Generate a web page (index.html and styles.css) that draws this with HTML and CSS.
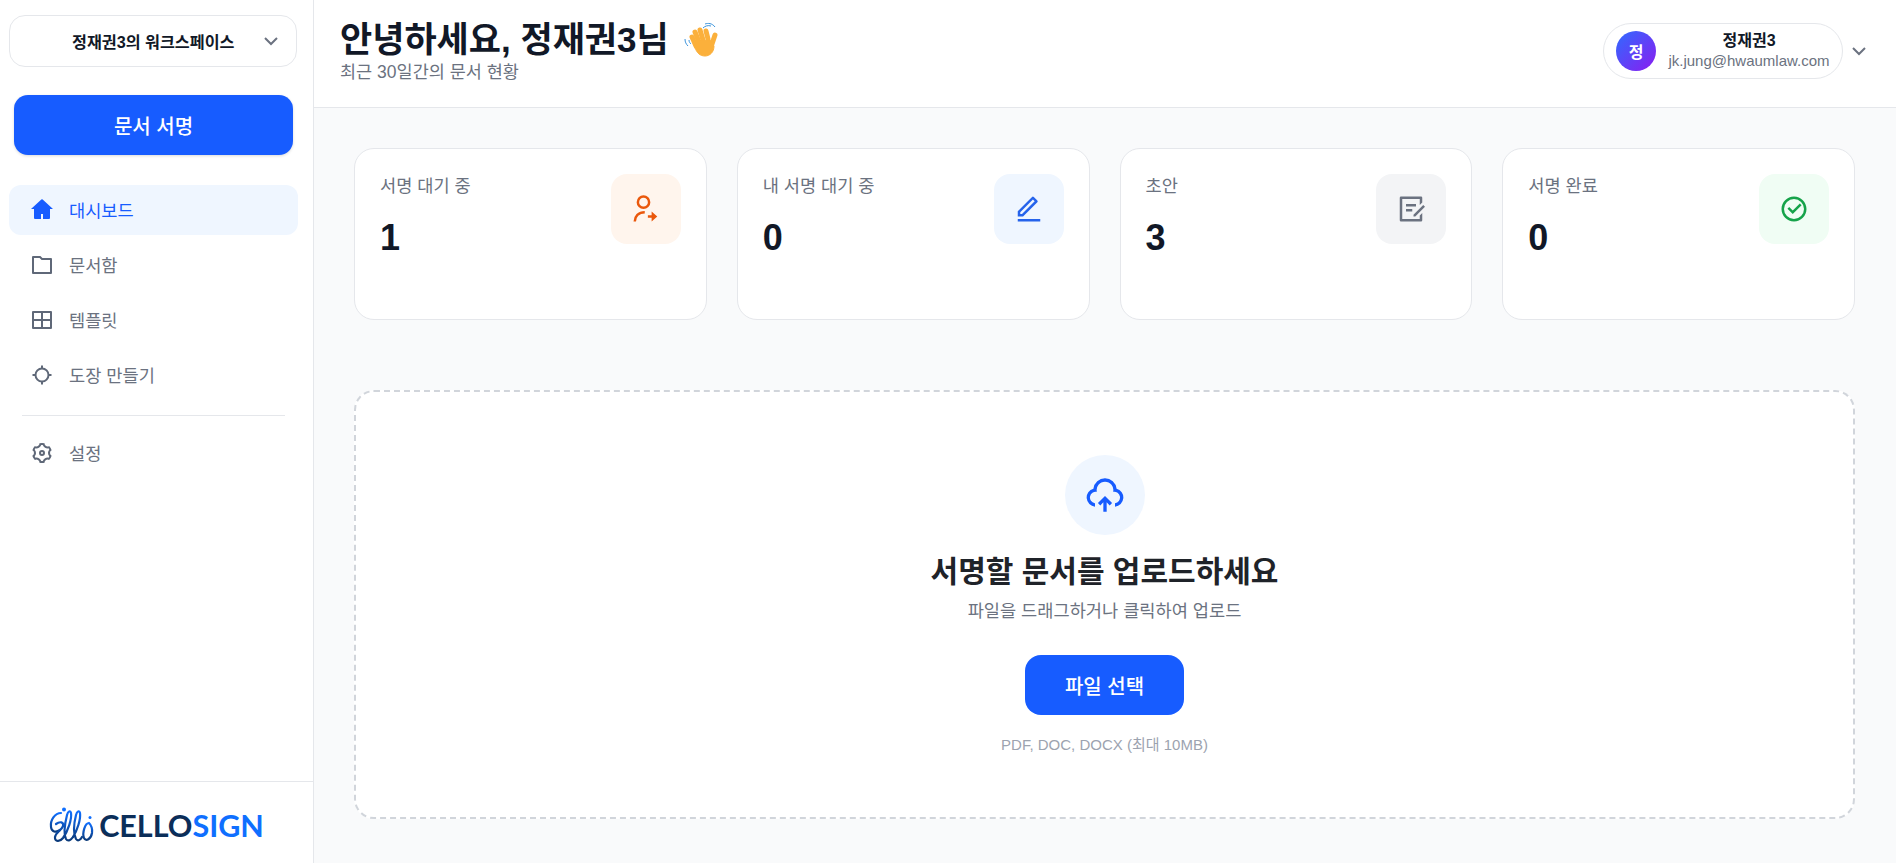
FILE: index.html
```html
<!DOCTYPE html>
<html lang="ko">
<head>
    <meta charset="utf-8">
    <title>CelloSign</title>
    <link rel="stylesheet" href="styles.css">
</head>
<body>
    <aside class="sidebar">
        <div class="workspace">
            <span class="workspace-name">정재권3의 워크스페이스</span>
            <svg class="chevron" viewBox="0 0 24 24"><path d="M6 9l6 6 6-6"/></svg>
        </div>
        <button class="sign-button">문서 서명</button>
        <nav class="nav">
            <a class="nav-item active">
                <svg class="nav-icon" viewBox="0 0 24 24"><path fill-rule="evenodd" d="M19 21H5a1 1 0 0 1-1-1v-9H1l10.327-9.388a1 1 0 0 1 1.346 0L23 11h-3v9a1 1 0 0 1-1 1zM11 16v5h2v-5h-2z"/></svg>
                <span class="nav-label">대시보드</span>
            </a>
            <a class="nav-item">
                <svg class="nav-icon" viewBox="0 0 24 24"><path d="M4 5v14h16V7h-8.414l-2-2H4zm8.414 0H21a1 1 0 0 1 1 1v14a1 1 0 0 1-1 1H3a1 1 0 0 1-1-1V4a1 1 0 0 1 1-1h7.414l2 2z"/></svg>
                <span class="nav-label">문서함</span>
            </a>
            <a class="nav-item">
                <svg class="nav-icon" viewBox="0 0 24 24"><path d="M21 3a1 1 0 0 1 1 1v16a1 1 0 0 1-1 1H3a1 1 0 0 1-1-1V4a1 1 0 0 1 1-1h18zM11 13H4v6h7v-6zm9 0h-7v6h7v-6zm-9-8H4v6h7V5zm9 0h-7v6h7V5z"/></svg>
                <span class="nav-label">템플릿</span>
            </a>
            <a class="nav-item">
                <svg class="nav-icon" viewBox="0 0 24 24"><circle class="line" cx="12" cy="12" r="6.5"/><path class="line" d="M12 2.5v3M12 18.5v3M2.5 12h3M18.5 12h3"/></svg>
                <span class="nav-label">도장 만들기</span>
            </a>
            <div class="nav-divider"></div>
            <a class="nav-item">
                <svg class="nav-icon" viewBox="0 0 24 24"><path d="M3.34 17a10.018 10.018 0 0 1-.978-2.326 3 3 0 0 0 .002-5.347A9.99 9.99 0 0 1 4.865 4.99a3 3 0 0 0 4.631-2.674 9.99 9.99 0 0 1 5.007.002 3 3 0 0 0 4.632 2.672c.579.59 1.093 1.261 1.525 2.01.433.749.757 1.53.978 2.326a3 3 0 0 0-.002 5.347 9.99 9.99 0 0 1-2.501 4.337 3 3 0 0 0-4.631 2.674 9.99 9.99 0 0 1-5.007-.002 3 3 0 0 0-4.632-2.672A10.018 10.018 0 0 1 3.34 17zm5.66.196a4.993 4.993 0 0 1 2.25 2.77c.499.047 1 .048 1.499.001A4.993 4.993 0 0 1 15 17.197a4.993 4.993 0 0 1 3.525-.565c.29-.41.54-.847.748-1.304A4.993 4.993 0 0 1 18 12c0-1.28.481-2.448 1.273-3.33a8.126 8.126 0 0 0-.75-1.303A4.993 4.993 0 0 1 15 6.804a4.993 4.993 0 0 1-2.25-2.77c-.499-.047-1-.048-1.499-.001A4.993 4.993 0 0 1 9 6.803a4.993 4.993 0 0 1-3.525.565 7.99 7.99 0 0 0-.748 1.304A4.993 4.993 0 0 1 6 12c0 1.28-.481 2.448-1.273 3.33.218.456.468.892.75 1.303A4.993 4.993 0 0 1 9 17.196zM12 15a3 3 0 1 1 0-6 3 3 0 0 1 0 6zm0-2a1 1 0 1 0 0-2 1 1 0 0 0 0 2z"/></svg>
                <span class="nav-label">설정</span>
            </a>
        </nav>
        <div class="sidebar-footer">
            <svg class="logo-mark" viewBox="0 0 45 36">
                <defs>
                    <linearGradient id="scriptGrad" x1="0" y1="0" x2="0" y2="1">
                        <stop offset="0" stop-color="#0f6fff"/>
                        <stop offset="1" stop-color="#0b3a7a"/>
                    </linearGradient>
                </defs>
                <g class="logo-script" stroke="url(#scriptGrad)">
                    <path d="M12 6C6 6 1 13 2 20C2.500 25 7 26 11 23"/>
                    <path d="M7 17C11 14 15 15 14 19C13 23 7 25 6 30C5.500 35 11 35 14 31C19 24 23 12 22 6C21.500 3 19 4 18 8C16 16 14 26 17 32C19 35 22 33 24 30"/>
                    <path d="M24 30C28 24 32 12 31 6C30.500 3 28 4 27 8C25 16 24 26 27 32C29 35 32 32 33 30"/>
                    <path d="M40 16C36 16 33 26 35 31C37 35 42 32 43 26C43.500 22 42 18 40 16"/>
                </g>
                <circle cx="15" cy="2.500" r="2" fill="#0f6fff"/>
                <circle cx="41" cy="10.500" r="1.500" fill="#0f6fff"/>
            </svg>
            <span class="logo-text">CELLO<span class="logo-accent">SIGN</span></span>
        </div>
    </aside>

    <div class="content">
        <header class="topbar">
            <div>
                <h1 class="greeting">안녕하세요, 정재권3님
                    <svg class="wave" viewBox="0 0 34 36">
                        <g class="wave-lines">
                            <path d="M19 6c2-2 5-3 8-2"/>
                            <path d="M21 2c3-1 7-1 10 3"/>
                            <path d="M1 17c0 3 1 5 3 7"/>
                            <path d="M5 18c0 2 1 3 2 4"/>
                        </g>
                        <g class="wave-hand">
                            <path d="M12 24L8 15"/>
                            <path d="M15 20L11 10"/>
                            <path d="M19 18L16 8"/>
                            <path d="M24 17L22 9"/>
                            <path d="M28 22l3-9"/>
                            <path class="wave-palm" d="M13 19l13-1 4 6c0 6-4 10-9 10s-8-3-10-8z"/>
                        </g>
                    </svg>
                </h1>
                <p class="subtitle">최근 30일간의 문서 현황</p>
            </div>
            <div class="user">
                <div class="user-pill">
                    <div class="avatar">정</div>
                    <div class="user-text">
                        <div class="user-name">정재권3</div>
                        <div class="user-email">jk.jung@hwaumlaw.com</div>
                    </div>
                </div>
                <svg class="chevron" viewBox="0 0 24 24"><path d="M6 9l6 6 6-6"/></svg>
            </div>
        </header>

        <main class="main">
            <section class="stats">
                <div class="card">
                    <div>
                        <div class="card-label">서명 대기 중</div>
                        <div class="card-value">1</div>
                    </div>
                    <div class="card-icon orange">
                        <svg viewBox="0 0 24 24">
                            <circle class="line" cx="10" cy="6.500" r="4.500"/>
                            <path class="line" d="M3 22c0-4 3-7.500 8-7.500"/>
                            <path d="M13.500 17h3v-3l4.500 4-4.500 4v-3h-3z"/>
                        </svg>
                    </div>
                </div>
                <div class="card">
                    <div>
                        <div class="card-label">내 서명 대기 중</div>
                        <div class="card-value">0</div>
                    </div>
                    <div class="card-icon blue">
                        <svg viewBox="0 0 24 24"><path d="M6.414 16L16.556 5.858l-1.414-1.414L5 14.586V16h1.414zm.829 2H3v-4.243L14.435 2.322a1 1 0 0 1 1.414 0l2.829 2.829a1 1 0 0 1 0 1.414L7.243 18zM3 20h18v2H3v-2z"/></svg>
                    </div>
                </div>
                <div class="card">
                    <div>
                        <div class="card-label">초안</div>
                        <div class="card-value">3</div>
                    </div>
                    <div class="card-icon gray">
                        <svg viewBox="0 0 24 24"><path d="M20 2a1 1 0 0 1 1 1v3.757l-2 2V4H5v16h14v-2.758l2-2V21a1 1 0 0 1-1 1H4a1 1 0 0 1-1-1V3a1 1 0 0 1 1-1h16zm1.778 6.808l1.414 1.414L15.414 18l-1.416-.002.002-1.412 7.778-7.778zM13 12v2H8v-2h5zm3-4v2H8V8h8z"/></svg>
                    </div>
                </div>
                <div class="card">
                    <div>
                        <div class="card-label">서명 완료</div>
                        <div class="card-value">0</div>
                    </div>
                    <div class="card-icon green">
                        <svg viewBox="0 0 24 24"><path d="M12 22C6.477 22 2 17.523 2 12S6.477 2 12 2s10 4.477 10 10-4.477 10-10 10zm0-2a8 8 0 1 0 0-16 8 8 0 0 0 0 16zm-.997-4L6.760 11.757l1.414-1.414 2.829 2.829 5.656-5.657 1.415 1.414L11.003 16z"/></svg>
                    </div>
                </div>
            </section>

            <section class="upload">
                <div class="upload-circle">
                    <svg viewBox="0 0 24 24"><path d="M12 12.586l4.243 4.242-1.415 1.415L13 16.415V22h-2v-5.587l-1.828 1.830-1.415-1.415L12 12.586zM12 2a7.001 7.001 0 0 1 6.954 6.194A5.500 5.500 0 0 1 18 18.978v-2.014a3.500 3.500 0 1 0-1.111-6.910 5 5 0 1 0-9.777 0 3.500 3.500 0 0 0-1.292 6.880l.180.030v2.014a5.500 5.500 0 0 1-.954-10.784A7 7 0 0 1 12 2z"/></svg>
                </div>
                <h2 class="upload-title">서명할 문서를 업로드하세요</h2>
                <p class="upload-desc">파일을 드래그하거나 클릭하여 업로드</p>
                <button class="file-button">파일 선택</button>
                <p class="upload-note">PDF, DOC, DOCX (최대 10MB)</p>
            </section>
        </main>
    </div>
</body>
</html>
```

FILE: styles.css
```css
* {
    box-sizing: border-box;
}
body {
    margin: 0;
    height: 100vh;
    display: flex;
    overflow: hidden;
    font-family: "Liberation Sans", "Noto Sans CJK KR", sans-serif;
    color: #111827;
    background-color: #f9fafb;
}
button {
    font-family: inherit;
    border: none;
    cursor: pointer;
}
svg {
    display: block;
    fill: currentColor;
}
.line {
    fill: none;
    stroke: currentColor;
    stroke-width: 2;
}
.chevron {
    width: 24px;
    height: 24px;
    fill: none;
    stroke: #6b7280;
    stroke-width: 2;
    flex-shrink: 0;
}

/* sidebar */
.sidebar {
    width: 314px;
    flex-shrink: 0;
    display: flex;
    flex-direction: column;
    background-color: #fff;
    border-right: 1px solid #e5e7eb;
    padding-top: 15px;
}
.workspace {
    height: 52px;
    margin: 0 16px 0 9px;
    padding: 0 13px 0 62px;
    display: flex;
    align-items: center;
    justify-content: space-between;
    border: 1px solid #e5e7eb;
    border-radius: 16px;
}
.workspace-name {
    font-size: 16.2px;
    font-weight: 700;
    white-space: nowrap;
}
.sign-button {
    height: 60px;
    margin: 28px 20px 0 14px;
    border-radius: 14px;
    background-color: #175cff;
    color: #fff;
    font-size: 20px;
    font-weight: 500;
    box-shadow: 0 1px 3px rgba(0, 0, 0, 0.15);
}
.nav {
    margin: 30px 15px 0 9px;
    display: flex;
    flex-direction: column;
    gap: 5px;
}
.nav-item {
    height: 50px;
    padding: 0 21px;
    display: flex;
    align-items: center;
    gap: 15px;
    border-radius: 12px;
    font-size: 17.6px;
    color: #6b7280;
}
.nav-label {
    margin-bottom: 2px;
}
.nav-item.active {
    background-color: #eff6ff;
    color: #175cff;
}
.nav-icon {
    width: 24px;
    height: 24px;
    color: #5f6878;
}
.active .nav-icon {
    color: #175cff;
}
.nav-divider {
    height: 1px;
    margin: 10px 13px 7px;
    background-color: #e5e7eb;
}
.sidebar-footer {
    margin-top: auto;
    height: 82px;
    padding-top: 4px;
    display: flex;
    align-items: center;
    justify-content: center;
    gap: 5px;
    border-top: 1px solid #e5e7eb;
}
.logo-mark {
    width: 45px;
    height: 36px;
}
.logo-script {
    fill: none;
    stroke-width: 2.2;
    stroke-linecap: round;
}
.logo-text {
    font-family: "Lato", sans-serif;
    font-size: 30.5px;
    font-weight: 700;
    color: #0b2e59;
}
.logo-accent {
    color: #0f6fff;
}

/* header */
.content {
    flex: 1;
    min-width: 0;
    display: flex;
    flex-direction: column;
}
.topbar {
    height: 108px;
    flex-shrink: 0;
    padding: 0 25px 4px 26px;
    display: flex;
    align-items: center;
    justify-content: space-between;
    background-color: #fff;
    border-bottom: 1px solid #e5e7eb;
}
.greeting {
    margin: 0;
    display: flex;
    align-items: center;
    font-size: 35px;
    font-weight: 700;
    line-height: 40px;
}
.wave {
    width: 34px;
    height: 36px;
    margin-left: 15px;
}
.wave-lines {
    fill: none;
    stroke: #3a93dc;
    stroke-width: 1;
}
.wave-hand {
    fill: none;
    stroke: #fbb03b;
    stroke-width: 5;
    stroke-linecap: round;
}
.wave-palm {
    fill: #fbb03b;
    stroke-width: 1;
}
.subtitle {
    margin: 0;
    font-size: 17.5px;
    line-height: 24px;
    color: #6b7280;
}
.user {
    margin-top: -2px;
    display: flex;
    align-items: center;
    gap: 4px;
}
.user-pill {
    width: 240px;
    height: 56px;
    padding: 0 12px;
    display: flex;
    align-items: center;
    gap: 12px;
    border: 1px solid #e5e7eb;
    border-radius: 28px;
}
.avatar {
    width: 40px;
    height: 40px;
    flex-shrink: 0;
    display: flex;
    align-items: center;
    justify-content: center;
    border-radius: 50%;
    background: linear-gradient(135deg, #2f6bff, #8b1cf0);
    color: #fff;
    font-size: 16px;
    font-weight: 700;
}
.user-text {
    flex: 1;
    text-align: center;
}
.user-name {
    font-size: 16px;
    font-weight: 700;
    line-height: 20px;
}
.user-email {
    font-size: 15px;
    line-height: 20px;
    color: #6b7280;
}

/* stat cards */
.main {
    padding: 40px 41px 0 40px;
}
.stats {
    display: grid;
    grid-template-columns: repeat(4, 1fr);
    gap: 30px;
}
.card {
    height: 172px;
    padding: 25px;
    display: flex;
    justify-content: space-between;
    background-color: #fff;
    border: 1px solid #e5e7eb;
    border-radius: 20px;
}
.card-label {
    font-size: 17.6px;
    line-height: 24px;
    color: #6b7280;
}
.card-value {
    margin-top: 18px;
    font-size: 36px;
    font-weight: 700;
    line-height: 44px;
}
.card-icon {
    width: 70px;
    height: 70px;
    display: flex;
    align-items: center;
    justify-content: center;
    border-radius: 16px;
}
.card-icon svg {
    width: 30px;
    height: 30px;
}
.orange { background-color: #fff5ed; color: #ea580c; }
.blue { background-color: #eff6ff; color: #2563eb; }
.gray { background-color: #f3f4f6; color: #6b7280; }
.green { background-color: #f0fdf4; color: #16a34a; }

/* upload area */
.upload {
    height: 429px;
    margin-top: 70px;
    padding-top: 63px;
    display: flex;
    flex-direction: column;
    align-items: center;
    background-color: #fff;
    border: 2px dashed #d1d5db;
    border-radius: 20px;
}
.upload-circle {
    width: 80px;
    height: 80px;
    display: flex;
    align-items: center;
    justify-content: center;
    border-radius: 50%;
    background-color: #eff6ff;
    color: #175cff;
}
.upload-circle svg {
    width: 40px;
    height: 40px;
}
.upload-title {
    margin: 17px 0 0;
    font-size: 30px;
    font-weight: 700;
    line-height: 40px;
    color: #1f2329;
}
.upload-desc {
    margin: 8px 0 0;
    font-size: 17.6px;
    line-height: 22px;
    color: #6b7280;
}
.file-button {
    width: 159px;
    height: 60px;
    margin-top: 33px;
    border-radius: 16px;
    background-color: #175cff;
    color: #fff;
    font-size: 20px;
    font-weight: 500;
}
.upload-note {
    margin: 20px 0 0;
    font-size: 15px;
    line-height: 20px;
    color: #9ca3af;
}
```
